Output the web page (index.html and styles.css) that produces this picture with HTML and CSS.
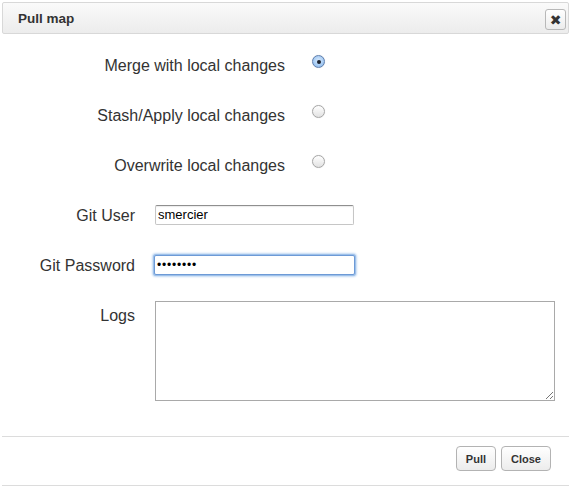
FILE: index.html
```html
<!DOCTYPE html>
<html>
<head>
<meta charset="utf-8">
<link rel="stylesheet" href="styles.css">
</head>
<body>
<div class="dialog">
  <div class="header">
    <span class="title">Pull map</span>
    <button class="xbtn" type="button">✖</button>
  </div>
  <div class="body">
    <div class="row radio-row">
      <span class="rlabel">Merge with local changes</span>
      <span class="radio checked"></span>
    </div>
    <div class="row radio-row">
      <span class="rlabel">Stash/Apply local changes</span>
      <span class="radio"></span>
    </div>
    <div class="row radio-row">
      <span class="rlabel">Overwrite local changes</span>
      <span class="radio"></span>
    </div>
    <div class="row field-row">
      <span class="flabel">Git User</span>
      <div class="input">smercier</div>
    </div>
    <div class="row field-row">
      <span class="flabel">Git Password</span>
      <div class="input focus">&#8226;&#8226;&#8226;&#8226;&#8226;&#8226;&#8226;&#8226;</div>
    </div>
    <div class="row logs-row">
      <span class="flabel">Logs</span>
      <div class="textarea"><span class="grip"></span></div>
    </div>
  </div>
  <div class="footer">
    <button class="btn" type="button">Pull</button>
    <button class="btn" type="button">Close</button>
  </div>
</div>
</body>
</html>
```

FILE: styles.css
```css
html, body {
  margin: 0;
  padding: 0;
  background: #fff;
}
body {
  font-family: "Liberation Sans", Arial, sans-serif;
  color: #333;
}
.dialog {
  width: 571px;
  height: 486px;
  display: flex;
  flex-direction: column;
}
.header {
  margin: 2px 2px 0 2px;
  height: 30px;
  border: 1px solid #d8d8d8;
  border-radius: 2px;
  background: linear-gradient(#fafafa, #ececec);
  display: flex;
  align-items: center;
  justify-content: space-between;
  padding: 0 2px 0 15px;
}
.title {
  font-weight: bold;
  font-size: 13.5px;
  color: #333;
  margin-top: 1px;
}
.xbtn {
  width: 21px;
  height: 21px;
  padding: 0;
  border: 1px solid #b8b8b8;
  border-radius: 3px;
  background: linear-gradient(#ffffff, #ececec);
  font-size: 14px;
  line-height: 18px;
  color: #333;
  font-family: "DejaVu Sans", sans-serif;
  text-align: center;
  margin-top: 3px;
}
.body {
  padding-top: 6px;
  height: 396px;
}
.row {
  display: flex;
  font-size: 16px;
  color: #333;
}
.radio-row {
  height: 50px;
  align-items: center;
}
.rlabel {
  width: 285px;
  text-align: right;
  margin-top: 2px;
}
.radio {
  width: 11px;
  height: 11px;
  border-radius: 50%;
  border: 1px solid #a6a6a6;
  background: linear-gradient(#ffffff, #e2e2e2);
  margin-left: 27px;
  margin-top: -7px;
  box-shadow: 0 0 1px rgba(0,0,0,0.15);
  display: flex;
  align-items: center;
  justify-content: center;
}
.radio.checked {
  border-color: #5f7fae;
  background: radial-gradient(circle at 50% 40%, #d6e8fb 0%, #a9cdf4 55%, #7fb0e8 100%);
}
.radio.checked::after {
  content: "";
  width: 4px;
  height: 4px;
  border-radius: 50%;
  background: #1a2230;
}
.field-row {
  height: 50px;
  align-items: center;
}
.flabel {
  width: 135px;
  text-align: right;
  margin-top: 2px;
}
.input {
  margin-left: 20px;
  width: 195px;
  height: 18px;
  border: 1px solid #c6c6c6;
  border-top-color: #8f8f8f;
  border-radius: 2px;
  background: #fff;
  font-size: 13px;
  line-height: 18px;
  padding-left: 2px;
  color: #000;
  box-shadow: inset 0 1px 1px rgba(0,0,0,0.08);
}
.input.focus {
  margin-left: 19px;
  width: 197px;
  border: 1px solid #6d9ad6;
  box-shadow: 0 0 0 1px #9dc0ea, 0 0 2px 2px #c3d9f3;
  border-radius: 2px;
  font-size: 12px;
  letter-spacing: 0.8px;
  padding-left: 2px;
}
.logs-row {
  padding-top: 11px;
  align-items: flex-start;
}
.logs-row .flabel {
  margin-top: 6px;
}
.textarea {
  margin-left: 20px;
  width: 398px;
  height: 98px;
  border: 1px solid #a9a9a9;
  background: #fff;
  position: relative;
}
.grip {
  position: absolute;
  right: 1px;
  bottom: 1px;
  width: 7px;
  height: 7px;
  background: linear-gradient(135deg, transparent 45%, #777 45%, #777 55%, transparent 55%, transparent 75%, #777 75%, #777 85%, transparent 85%);
}
.footer {
  margin: 0 2px;
  border-top: 1px solid #dcdcdc;
  border-bottom: 1px solid #dcdcdc;
  height: 50px;
  display: flex;
  justify-content: flex-end;
  align-items: flex-start;
  padding: 9px 18px 0 0;
  box-sizing: border-box;
  gap: 5px;
}
.btn {
  height: 25px;
  padding: 0 9px;
  border: 1px solid #b3b3b3;
  border-radius: 4px;
  background: linear-gradient(#ffffff, #ececec);
  font-family: "Liberation Sans", Arial, sans-serif;
  font-weight: bold;
  font-size: 11px;
  color: #333;
}
```
